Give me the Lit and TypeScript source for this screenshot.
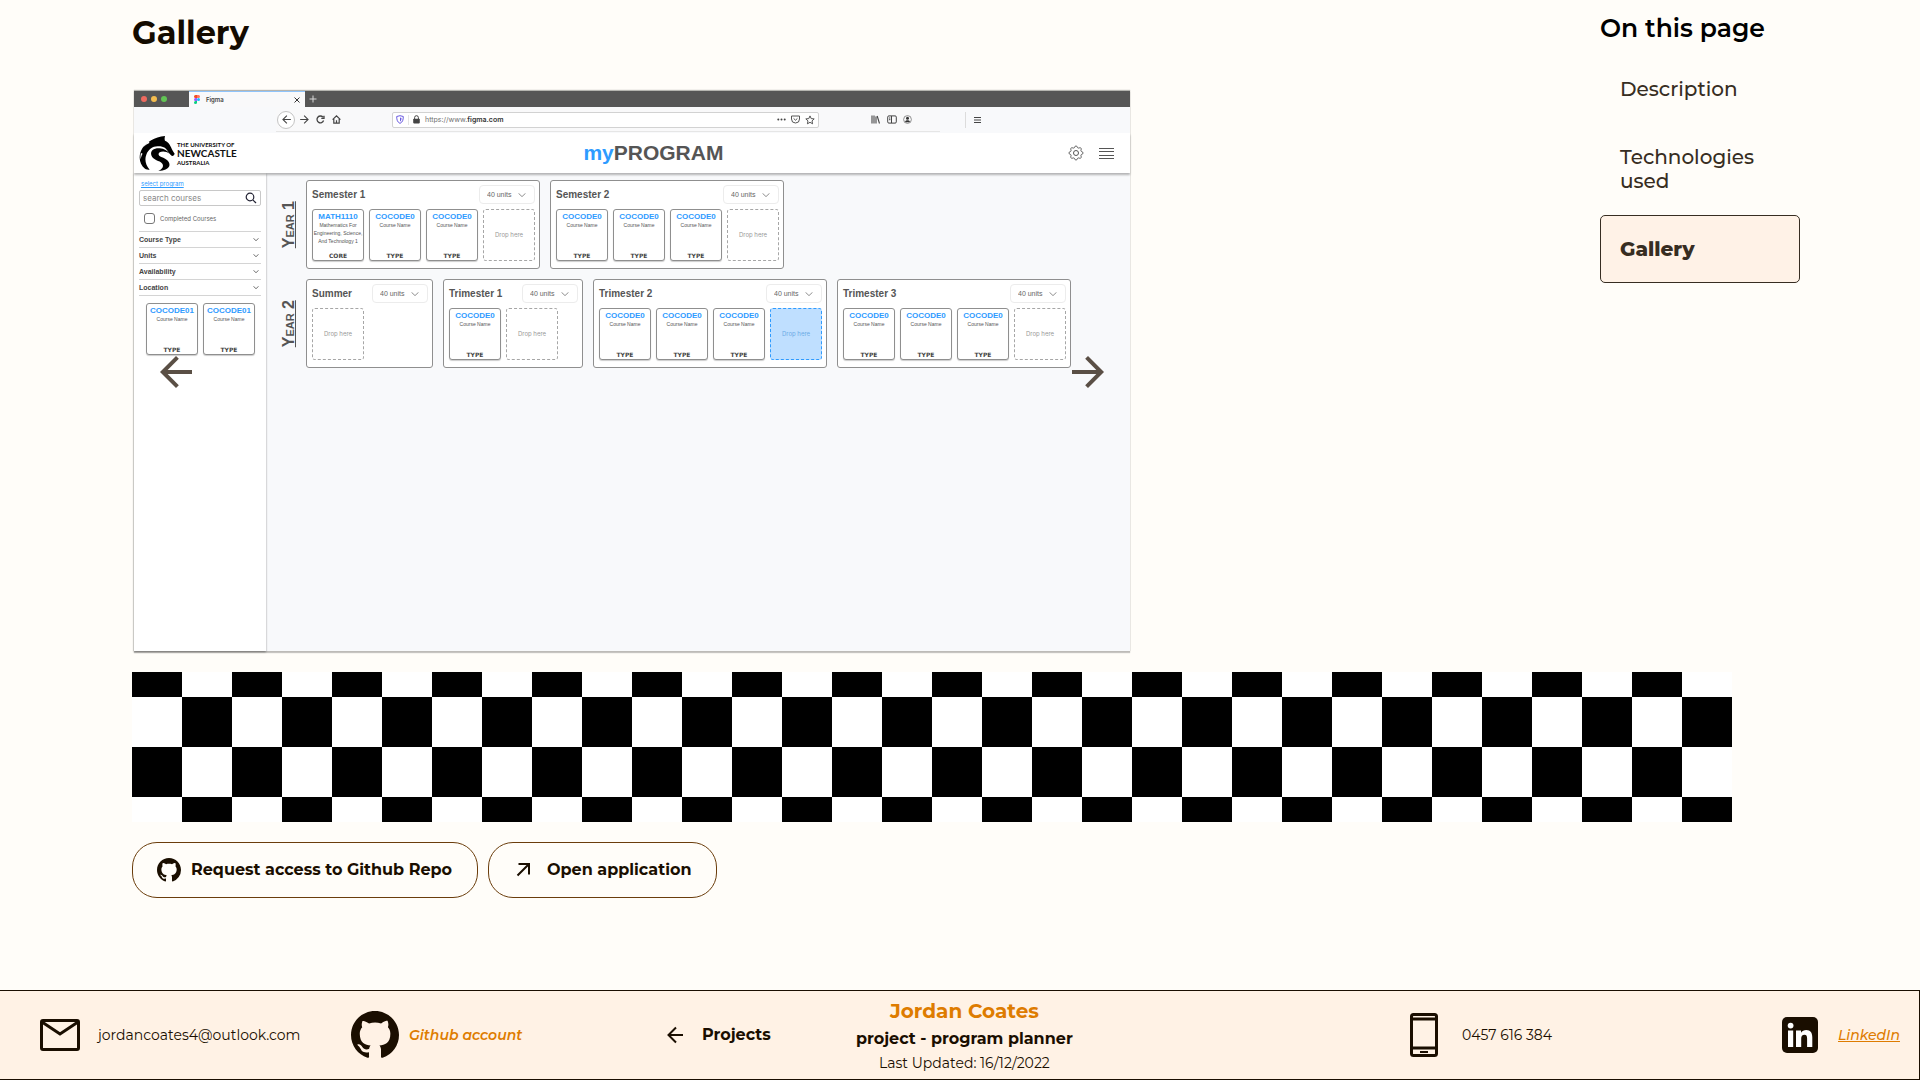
import { LitElement, html, css } from "lit";
import { customElement, property } from "lit/decorators.js";

interface Course {
  code: string;
  name: string;
  type: string;
}

interface Term {
  title: string;
  size: "small" | "medium" | "large";
  courses: Course[];
  active?: boolean;
}

interface Year {
  label: string;
  terms: Term[];
}

const course = (code = "COCODE0"): Course => ({ code, name: "Course Name", type: "TYPE" });

const YEARS: Year[] = [
  {
    label: "Year 1",
    terms: [
      {
        title: "Semester 1",
        size: "large",
        courses: [
          { code: "MATH1110", name: "Mathematics For\nEngineering, Science,\nAnd Technology 1", type: "CORE" },
          course(),
          course(),
        ],
      },
      { title: "Semester 2", size: "large", courses: [course(), course(), course()] },
    ],
  },
  {
    label: "Year 2",
    terms: [
      { title: "Summer", size: "small", courses: [] },
      { title: "Trimester 1", size: "medium", courses: [course()] },
      { title: "Trimester 2", size: "large", courses: [course(), course(), course()], active: true },
      { title: "Trimester 3", size: "large", courses: [course(), course(), course()] },
    ],
  },
];

const FILTERS = ["Course Type", "Units", "Availability", "Location"];

const reset = css`
  *,
  *::before,
  *::after {
    box-sizing: border-box;
  }
  svg {
    display: block;
    flex: none;
  }
  button {
    appearance: none;
    border: 0;
    padding: 0;
    margin: 0;
    background: none;
    color: inherit;
    font: inherit;
    cursor: pointer;
  }
  h1,
  h2,
  h3,
  p,
  ul {
    margin: 0;
    padding: 0;
    list-style: none;
  }
`;

const githubMark = (size: number) => html`<svg width=${size} height=${size} viewBox="0 0 16 16" aria-hidden="true">
  <path
    fill="currentColor"
    d="M8 0C3.58 0 0 3.58 0 8c0 3.54 2.29 6.53 5.47 7.59.4.07.55-.17.55-.38 0-.19-.01-.82-.01-1.49-2.01.37-2.53-.49-2.69-.94-.09-.23-.48-.94-.82-1.13-.28-.15-.68-.52-.01-.53.63-.01 1.08.58 1.23.82.72 1.21 1.87.87 2.33.66.07-.52.28-.87.51-1.07-1.78-.2-3.64-.89-3.64-3.95 0-.87.31-1.59.82-2.15-.08-.2-.36-1.02.08-2.12 0 0 .67-.21 2.2.82.64-.18 1.32-.27 2-.27s1.36.09 2 .27c1.53-1.04 2.2-.82 2.2-.82.44 1.1.16 1.92.08 2.12.51.56.82 1.27.82 2.15 0 3.07-1.87 3.75-3.65 3.95.29.25.54.73.54 1.48 0 1.07-.01 1.93-.01 2.2 0 .21.15.46.55.38A8.01 8.01 0 0 0 16 8c0-4.42-3.58-8-8-8z"
  />
</svg>`;

const arrowLeft = (size: number) => html`<svg width=${size} height=${size} viewBox="0 0 24 24" aria-hidden="true">
  <path fill="currentColor" d="M20 11H7.83l5.59-5.59L12 4l-8 8 8 8 1.41-1.41L7.83 13H20v-2z" />
</svg>`;

const arrowRight = (size: number) => html`<svg width=${size} height=${size} viewBox="0 0 24 24" aria-hidden="true">
  <path fill="currentColor" d="M12 4l-1.41 1.41L16.17 11H4v2h12.17l-5.58 5.59L12 20l8-8-8-8z" />
</svg>`;

const chevron = (width: number) => html`<svg
  width=${width}
  height=${width / 2}
  viewBox="0 0 8 4"
  fill="none"
  stroke="currentColor"
  aria-hidden="true"
>
  <path d="M.5 .3L4 3.6L7.5 .3" />
</svg>`;

/** Outline of the settings cog: a ring whose radius swells eight times per turn. */
const cogOutline = (() => {
  const points: string[] = [];
  for (let i = 0; i < 96; i++) {
    const a = (i / 96) * Math.PI * 2;
    const wave = Math.max(-0.6, Math.min(0.6, Math.cos(a * 8)));
    const r = 6.2 + wave * 1.1;
    points.push(`${(8 + r * Math.sin(a)).toFixed(2)} ${(8 - r * Math.cos(a)).toFixed(2)}`);
  }
  return `M${points.join("L")}Z`;
})();

@customElement("course-card")
export class CourseCard extends LitElement {
  @property({ attribute: false }) course!: Course;

  static styles = [
    reset,
    css`
      :host {
        display: block;
        width: 52px;
        flex: none;
      }
      .card {
        display: flex;
        flex-direction: column;
        align-items: center;
        height: 52px;
        padding: 2px 0 0;
        border: 1px solid #8f8f8f;
        border-radius: 3px;
        background: #fff;
        box-shadow: 0 1px 1px rgba(0, 0, 0, 0.2);
        color: #555;
        text-align: center;
        white-space: pre;
      }
      .code {
        font: 700 8px/9px "Liberation Sans", Arial, sans-serif;
        color: #2e9bff;
      }
      .name {
        font: 400 5px/8px "Liberation Sans", Arial, sans-serif;
      }
      .type {
        margin-top: auto;
        font: 700 6px/8px "DejaVu Sans", sans-serif;
        color: #444;
      }
    `,
  ];

  render() {
    return html`<article class="card">
      <h3 class="code">${this.course.code}</h3>
      <p class="name">${this.course.name}</p>
      <p class="type">${this.course.type}</p>
    </article>`;
  }
}

@customElement("term-box")
export class TermBox extends LitElement {
  @property({ attribute: false }) term!: Term;

  static styles = [
    reset,
    css`
      :host {
        display: block;
        flex: none;
      }
      .term {
        display: flex;
        flex-direction: column;
        gap: 5px;
        padding: 4px 4px 7px 5px;
        border: 1px solid #8f8f8f;
        border-radius: 3px;
        background: #fff;
      }
      .small {
        width: 127px;
      }
      .medium {
        width: 140px;
      }
      .large {
        width: 234px;
      }
      .head {
        display: flex;
        align-items: center;
        justify-content: space-between;
      }
      .title {
        font: 700 10px/12px "Liberation Sans", Arial, sans-serif;
        color: #555;
      }
      .units {
        display: grid;
        align-items: center;
        width: 56px;
        height: 19px;
        color: #8f8f8f;
      }
      .units > * {
        grid-area: 1 / 1;
      }
      .units svg {
        justify-self: end;
        margin-right: 9px;
        pointer-events: none;
      }
      select {
        appearance: none;
        width: 100%;
        height: 100%;
        margin: 0;
        padding: 0 0 0 7px;
        border: 1px solid #ececec;
        border-radius: 4px;
        background: #fff;
        color: #666;
        font: 400 7px/9px "Liberation Sans", Arial, sans-serif;
      }
      .slots {
        display: flex;
        gap: 5px;
      }
      .drop {
        display: grid;
        place-items: center;
        width: 52px;
        height: 52px;
        border: 1px dashed #a6a6a6;
        border-radius: 3px;
        font: 400 6px/8px Inter, sans-serif;
        color: #999;
      }
      .drop.active {
        border-color: #2e9bff;
        background: #bfdfff;
        color: #6cabe6;
      }
    `,
  ];

  render() {
    const t = this.term;
    return html`<section class="term ${t.size}">
      <div class="head">
        <h3 class="title">${t.title}</h3>
        <div class="units">
          <select aria-label="${t.title} units">
            <option>40 units</option>
          </select>
          ${chevron(8)}
        </div>
      </div>
      <div class="slots">
        ${t.courses.map((c) => html`<course-card .course=${c}></course-card>`)}
        <div class="drop ${t.active ? "active" : ""}">Drop here</div>
      </div>
    </section>`;
  }
}

@customElement("planner-shot")
export class PlannerShot extends LitElement {
  static styles = [
    reset,
    css`
      :host {
        display: block;
        font-family: "Liberation Sans", Arial, sans-serif;
        color: #555;
      }
      .window {
        border-top: 1px solid #b5b5b0;
        background: #f8f9fb;
        box-shadow: 0 2px 1px rgba(0, 0, 0, 0.22), 0 0 1px rgba(0, 0, 0, 0.3);
      }
      .tabs {
        display: flex;
        align-items: stretch;
        height: 16px;
        background: #565656;
      }
      .lights {
        display: flex;
        align-items: center;
        gap: 4px;
        width: 55px;
        padding-left: 7px;
      }
      .light {
        width: 6px;
        height: 6px;
        border-radius: 50%;
      }
      .red {
        background: #ee6a5f;
      }
      .amber {
        background: #f5bd4f;
      }
      .green {
        background: #61c454;
      }
      .tab {
        display: flex;
        align-items: center;
        width: 116px;
        padding: 0 5px;
        border-top: 1px solid #8fc4fb;
        background: #f9f9fa;
        font: 600 6px/8px Inter, sans-serif;
        color: #444;
      }
      .tab-name {
        flex: 1;
        padding-left: 6px;
      }
      .new-tab {
        padding: 0 4px;
        color: #d8d8d8;
      }
      .toolbar {
        display: flex;
        align-items: center;
        height: 26px;
        padding-left: 142px;
        color: #444;
      }
      .tools {
        display: flex;
        align-items: center;
        gap: 3px;
        width: 664px;
        height: 24px;
        padding-left: 1px;
        border-bottom: 1px solid #e6e6e6;
        background: #f9f9fa;
      }
      .tool {
        display: grid;
        place-items: center;
        width: 13px;
        height: 13px;
      }
      .back {
        width: 18px;
        height: 18px;
        border: 1px solid #c4c4c4;
        border-radius: 50%;
        background: #fff;
      }
      .address {
        display: flex;
        align-items: center;
        gap: 4px;
        width: 427px;
        height: 16px;
        margin: 0 47px 0 46px;
        padding: 0 3px;
        border: 1px solid #d2d2d2;
        border-radius: 2px;
        background: #fff;
      }
      .rule {
        width: 1px;
        height: 10px;
        background: #e4e4e4;
      }
      .url {
        flex: 1;
        padding-left: 1px;
        font: 400 7px/9px Inter, sans-serif;
        color: #707070;
      }
      .url b {
        font-weight: 600;
        color: #333;
      }
      .menu {
        display: flex;
        align-items: center;
        height: 16px;
        margin-left: 25px;
        padding-left: 8px;
        border-left: 1px solid #dcdcdc;
      }
      .banner {
        position: relative;
        display: grid;
        grid-template-columns: 451fr auto 408fr;
        align-items: center;
        height: 40px;
        background: #fff;
        box-shadow: 0 2px 2px rgba(0, 0, 0, 0.28);
      }
      .brand {
        display: flex;
        align-items: center;
        gap: 2px;
        padding-left: 5px;
        color: #111;
      }
      .brand-text {
        font: 700 6px/7px Lato, sans-serif;
      }
      .brand-name {
        display: block;
        font: 700 10px/11px Lato, sans-serif;
      }
      .product {
        font-size: 21px;
        line-height: 24px;
        font-weight: 700;
      }
      .product em {
        font-style: normal;
        color: #2e9bff;
      }
      .actions {
        display: flex;
        align-items: center;
        justify-content: flex-end;
        gap: 15px;
        padding-right: 16px;
      }
      .body {
        display: flex;
        min-height: 478px;
      }
      .side {
        width: 132px;
        padding: 7px 5px 0;
        background: #fff;
        box-shadow: 0 1px 2px rgba(0, 0, 0, 0.4);
      }
      .select-program {
        display: block;
        padding-left: 2px;
        font: 400 6px/8px Inter, sans-serif;
        color: #2e9bff;
      }
      .search {
        display: flex;
        align-items: center;
        height: 16px;
        margin-top: 2px;
        padding: 0 3px;
        border: 1px solid #c8c8c8;
        border-radius: 2px;
        color: #223;
      }
      .search input {
        flex: 1;
        min-width: 0;
        height: 12px;
        padding: 0;
        border: 0;
        outline: 0;
        background: none;
        font: 400 8px/10px Inter, sans-serif;
      }
      .search input::placeholder {
        color: #888;
      }
      .check {
        display: flex;
        align-items: center;
        gap: 5px;
        margin: 7px 0 7px 5px;
        font: 400 6px/8px Inter, sans-serif;
        color: #666;
      }
      .check input {
        appearance: none;
        width: 11px;
        height: 11px;
        margin: 0;
        border: 1px solid #777;
        border-radius: 3px;
      }
      .filters {
        border-top: 1px solid #d4d4d4;
      }
      .filters li {
        border-bottom: 1px solid #d4d4d4;
      }
      .filter {
        display: flex;
        align-items: center;
        justify-content: space-between;
        width: 100%;
        height: 15px;
        padding-right: 2px;
        font: 700 7px/9px "Liberation Sans", Arial, sans-serif;
        color: #444;
      }
      .results {
        display: flex;
        gap: 5px;
        margin-top: 7px;
        padding-left: 7px;
      }
      .plan {
        display: flex;
        flex-direction: column;
        gap: 10px;
        padding-top: 7px;
      }
      .year {
        display: flex;
        gap: 10px;
      }
      .year-label {
        display: flex;
        align-items: center;
        justify-content: flex-end;
        width: 30px;
      }
      .year-name {
        padding-left: 1px;
        border-left: 1px solid #555;
        writing-mode: vertical-rl;
        transform: rotate(180deg);
        font-size: 16px;
        line-height: 10px;
        font-weight: 700;
        font-variant: small-caps;
      }
    `,
  ];

  private horse() {
    return html`<svg width="36" height="35" viewBox="0 0 108 105" aria-hidden="true">
      <path
        d="M78 0C46 3 22 18 10 37C-3 58 0 84 18 98C21 100 28 101 32 101C20 88 16 70 22 56C28 40 42 30 58 31C76 31 82 38 88 48C92 55 97 60 101 60C105 58 106 55 107 53C101 46 98 36 92 26C89 20 85 17 78 14C76 10 77 5 78 0Z"
      />
      <path
        d="M92 53C82 46 70 44 62 49C56 54 59 60 67 63C84 69 94 78 91 90C87 99 76 104 58 105C70 99 75 91 70 83C62 73 42 74 37 58C33 44 45 36 62 37C76 38 85 44 92 53Z"
      />
      <path fill="#fff" d="M30 16C22 20 17 26 13 33C18 28 24 24 31 21ZM6 51C4 57 4 64 5 70C6 63 8 57 11 53Z" />
    </svg>`;
  }

  private toolbar() {
    return html`<div class="toolbar">
      <div class="tools">
        <button class="tool back" aria-label="Back">${arrowLeft(13)}</button>
        <button class="tool" aria-label="Forward">${arrowRight(13)}</button>
        <button class="tool" aria-label="Reload">
          <svg width="9" height="9" viewBox="0 0 9 9" fill="none" stroke="currentColor" stroke-width="1.3">
            <path d="M7.6 5.6A3.4 3.4 0 1 1 7 2.2M8 .8V3.4H5.3" />
          </svg>
        </button>
        <button class="tool" aria-label="Home">
          <svg width="9" height="9" viewBox="0 0 9 9" fill="none" stroke="currentColor" stroke-width="1.2">
            <path d="M.6 4.6L4.5 .9L8.4 4.6M1.8 4V8.2H7.2V4M4.5 8V5.2" />
          </svg>
        </button>
        <div class="address">
          <svg width="8" height="9" viewBox="0 0 8 9" fill="none" stroke="#6a5be0">
            <path d="M4 .7L7.3 1.5C7.3 5 6.6 7.1 4 8.4C1.4 7.1 .7 5 .7 1.5Z" />
            <path d="M4 2.5V6.5C5.2 5.6 5.5 4.5 5.5 2.9Z" fill="#6a5be0" stroke="none" />
          </svg>
          <span class="rule"></span>
          <svg width="7" height="9" viewBox="0 0 7 9">
            <rect x="0.2" y="3.8" width="6.6" height="4.6" rx="0.8" fill="#444" />
            <path d="M1.6 4V2.6a1.9 1.9 0 0 1 3.8 0V4" fill="none" stroke="#444" />
          </svg>
          <span class="url">https://www.<b>figma.com</b></span>
          <svg width="9" height="9" viewBox="0 0 9 9" fill="#444">
            <circle cx="1.3" cy="4.5" r="1" />
            <circle cx="4.5" cy="4.5" r="1" />
            <circle cx="7.7" cy="4.5" r="1" />
          </svg>
          <svg width="11" height="9" viewBox="0 0 11 9" fill="none" stroke="#555">
            <path d="M1.5 1H9.5V4A4 4 0 0 1 1.5 4ZM3.6 3.4L5.5 5.2L7.4 3.4" />
          </svg>
          <svg width="10" height="10" viewBox="0 0 10 10" fill="none" stroke="#555">
            <path d="M5 .9L6.2 3.6L9.2 3.9L7 5.9L7.6 8.8L5 7.3L2.4 8.8L3 5.9L.8 3.9L3.8 3.6Z" />
          </svg>
        </div>
        <button class="tool" aria-label="Library">
          <svg width="9" height="9" viewBox="0 0 9 9" fill="none" stroke="currentColor" stroke-width="1.1">
            <path d="M1 .5V8.5M3 .5V8.5M5 1.5V8.5M6.2 1L8.5 8.5" />
          </svg>
        </button>
        <button class="tool" aria-label="Sidebar">
          <svg width="10" height="9" viewBox="0 0 10 9" fill="none" stroke="currentColor">
            <rect x="0.7" y="0.9" width="8.6" height="7.2" rx="1.2" />
            <path d="M4.5 1V8M2 3H3.4M2 4.7H3.4" />
          </svg>
        </button>
        <button class="tool" aria-label="Account">
          <svg width="9" height="9" viewBox="0 0 9 9">
            <circle cx="4.5" cy="4.5" r="3.9" fill="none" stroke="#777" stroke-width="0.8" />
            <circle cx="4.5" cy="3.3" r="1.5" fill="#333" />
            <path d="M2 6.4C3 4.9 6 4.9 7 6.4C6 7.6 3 7.6 2 6.4Z" fill="#333" />
          </svg>
        </button>
      </div>
      <div class="menu">
        <svg width="7" height="8" viewBox="0 0 7 8" stroke="#444"><path d="M0 1.5H7M0 4H7M0 6.5H7" /></svg>
      </div>
    </div>`;
  }

  render() {
    return html`<div class="window">
      <div class="tabs">
        <div class="lights">
          <span class="light red"></span><span class="light amber"></span><span class="light green"></span>
        </div>
        <div class="tab">
          <svg width="6" height="9" viewBox="0 0 6 9">
            <path d="M3 0H1.5a1.5 1.5 0 0 0 0 3H3Z" fill="#f24e1e" />
            <path d="M3 0H4.5a1.5 1.5 0 0 1 0 3H3Z" fill="#ff7262" />
            <path d="M3 3H1.5a1.5 1.5 0 0 0 0 3H3Z" fill="#a259ff" />
            <circle cx="4.5" cy="4.5" r="1.5" fill="#1abcfe" />
            <path d="M3 6H1.5a1.5 1.5 0 1 0 1.5 1.5Z" fill="#0acf83" />
          </svg>
          <span class="tab-name">Figma</span>
          <svg width="6" height="6" viewBox="0 0 6 6" stroke="#333"><path d="M.5 .5L5.5 5.5M5.5 .5L.5 5.5" /></svg>
        </div>
        <button class="new-tab" aria-label="New tab">
          <svg width="8" height="8" viewBox="0 0 8 8" stroke="currentColor"><path d="M4 .5V7.5M.5 4H7.5" /></svg>
        </button>
      </div>
      ${this.toolbar()}
      <header class="banner">
        <div class="brand">
          ${this.horse()}
          <div class="brand-text">THE UNIVERSITY OF<span class="brand-name">NEWCASTLE</span>AUSTRALIA</div>
        </div>
        <div class="product"><em>my</em>PROGRAM</div>
        <div class="actions">
          <button aria-label="Settings">
            <svg width="16" height="16" viewBox="0 0 16 16" fill="none" stroke="currentColor">
              <path d=${cogOutline} />
              <circle cx="8" cy="8" r="2.5" />
            </svg>
          </button>
          <button aria-label="Menu">
            <svg width="15" height="13" viewBox="0 0 15 13" stroke="currentColor">
              <path d="M0 1.5H15M0 4.5H15M0 8.5H15M0 11.5H15" />
            </svg>
          </button>
        </div>
      </header>
      <div class="body">
        <aside class="side">
          <a class="select-program" href="#program">select program</a>
          <div class="search">
            <input type="search" aria-label="Search courses" placeholder="search courses" />
            <svg width="12" height="12" viewBox="0 0 12 12" fill="none" stroke="currentColor" stroke-width="1.2">
              <circle cx="5" cy="5" r="3.8" />
              <path d="M7.8 7.8L11 11" />
            </svg>
          </div>
          <label class="check"><input type="checkbox" />Completed Courses</label>
          <ul class="filters">
            ${FILTERS.map((f) => html`<li><button class="filter">${f}${chevron(6)}</button></li>`)}
          </ul>
          <div class="results">
            <course-card .course=${course("COCODE01")}></course-card>
            <course-card .course=${course("COCODE01")}></course-card>
          </div>
        </aside>
        <div class="plan">
          ${YEARS.map(
            (y) => html`<section class="year">
              <div class="year-label"><h2 class="year-name">${y.label}</h2></div>
              ${y.terms.map((t) => html`<term-box .term=${t}></term-box>`)}
            </section>`,
          )}
        </div>
      </div>
    </div>`;
  }
}

@customElement("app-root")
export class AppRoot extends LitElement {
  static styles = [
    reset,
    css`
      :host {
        display: flex;
        flex-direction: column;
        min-height: 100vh;
        background: #fffdf9;
        color: #1a0e00;
        font-family: Montserrat, Inter, sans-serif;
      }
      a {
        color: inherit;
        text-decoration: none;
      }
      .top {
        display: flex;
        justify-content: space-between;
        align-items: flex-start;
        gap: 40px;
        padding: 13px 120px 0 132px;
      }
      .gallery {
        flex: 0 1 1000px;
      }
      .heading {
        margin-bottom: 37px;
        font-size: 32px;
        line-height: 40px;
        font-weight: 700;
        color: #140b00;
      }
      .carousel {
        position: relative;
        padding: 0 2px;
      }
      .step {
        position: absolute;
        top: 50%;
        margin-top: -23px;
        color: #5a4f45;
      }
      .previous {
        left: 20px;
      }
      .next {
        right: 20px;
      }
      .contents {
        width: 200px;
        color: #372d22;
      }
      .contents-title {
        margin-bottom: 12px;
        font-size: 25px;
        line-height: 30px;
        font-weight: 600;
        color: #000;
      }
      .entry {
        display: block;
        padding: 21px 19px;
        border: 1px solid transparent;
        border-radius: 5px;
        font-size: 20px;
        line-height: 24px;
        font-weight: 500;
      }
      .entry.current {
        border-color: #372d22;
        background: #fff2e7;
        font-weight: 800;
      }
      .lower {
        display: flex;
        flex-direction: column;
        gap: 20px;
        padding: 21px 188px 20px 132px;
      }
      .checker {
        height: 150px;
        background: repeating-conic-gradient(#fff 0 25%, #000 0 50%) 0 -25px / 100px 100px;
      }
      .links {
        display: flex;
        gap: 10px;
      }
      .pill {
        display: flex;
        align-items: center;
        height: 56px;
        padding: 0 25px 0 24px;
        border: 1px solid #6b3d0c;
        border-radius: 25px;
        font-size: 16px;
        line-height: 20px;
        font-weight: 700;
      }
      .pill svg {
        margin-right: 10px;
      }
      .pill .open {
        margin-right: 14px;
      }
      .footer {
        display: grid;
        grid-template-columns: 311fr 316fr 189fr 554fr 372fr 118fr;
        align-items: center;
        height: 90px;
        margin-top: auto;
        padding: 0 19px 0 40px;
        border: 1px solid #1a0e00;
        border-left: 0;
        background: #fff2e5;
        font-size: 14px;
        line-height: 18px;
      }
      .contact {
        display: flex;
        align-items: center;
        gap: 18px;
        white-space: nowrap;
      }
      .contact.near {
        gap: 10px;
      }
      .contact.phone {
        gap: 24px;
      }
      .contact.social {
        gap: 20px;
      }
      .link {
        font-style: italic;
        font-weight: 600;
        color: #de7c00;
      }
      .underlined {
        font-weight: 500;
        text-decoration: underline;
      }
      .projects {
        font-size: 16px;
        line-height: 20px;
        font-weight: 700;
      }
      .about {
        justify-self: start;
        text-align: center;
        white-space: nowrap;
      }
      .owner {
        font-size: 20px;
        line-height: 28px;
        font-weight: 700;
        color: #de7c00;
      }
      .project {
        font-size: 16px;
        line-height: 28px;
        font-weight: 700;
      }
      .updated {
        line-height: 20px;
      }
    `,
  ];

  render() {
    return html`
      <div class="top">
        <main class="gallery">
          <h1 class="heading">Gallery</h1>
          <div class="carousel">
            <planner-shot></planner-shot>
            <button class="step previous" aria-label="Previous image">${arrowLeft(48)}</button>
            <button class="step next" aria-label="Next image">${arrowRight(48)}</button>
          </div>
        </main>
        <nav class="contents">
          <h2 class="contents-title">On this page</h2>
          <a class="entry" href="#description">Description</a>
          <a class="entry" href="#technologies">Technologies used</a>
          <a class="entry current" href="#gallery" aria-current="true">Gallery</a>
        </nav>
      </div>
      <div class="lower">
        <div class="checker"></div>
        <div class="links">
          <a class="pill" href="#repo">${githubMark(24)}Request access to Github Repo</a>
          <a class="pill" href="#app">
            <svg class="open" width="20" height="20" viewBox="0 0 20 20" fill="none" stroke="currentColor" stroke-width="2">
              <path d="M4.5 15.5L15.5 4.5M5.5 4H16V14.5" />
            </svg>
            Open application
          </a>
        </div>
      </div>
      <footer class="footer">
        <div class="contact">
          <svg width="40" height="32" viewBox="0 0 40 32" fill="none" stroke="currentColor" stroke-width="3">
            <rect x="1.5" y="1.5" width="37" height="29" rx="1.5" />
            <path d="M2 3L20 15L38 3" />
          </svg>
          <span>jordancoates4@outlook.com</span>
        </div>
        <div class="contact near">
          ${githubMark(48)}
          <a class="link" href="#github">Github account</a>
        </div>
        <a class="contact projects" href="#projects">
          <svg width="17" height="20" viewBox="0 0 17 20" fill="none" stroke="currentColor" stroke-width="2">
            <path d="M16 10H1.5M9 2.5L1.5 10L9 17.5" />
          </svg>
          Projects
        </a>
        <div class="about">
          <p class="owner">Jordan Coates</p>
          <p class="project">project - program planner</p>
          <p class="updated">Last Updated: 16/12/2022</p>
        </div>
        <div class="contact phone">
          <svg width="28" height="44" viewBox="0 0 28 44" fill="none" stroke="currentColor" stroke-width="3">
            <rect x="1.5" y="1.5" width="25" height="41" rx="2" />
            <path d="M2 6H26M2 35H26" />
            <path d="M10 39H18" stroke-width="2" />
          </svg>
          <span>0457 616 384</span>
        </div>
        <div class="contact social">
          <svg width="36" height="36" viewBox="0 0 36 36">
            <rect width="36" height="36" rx="5" fill="#1a0e00" />
            <g fill="#fff">
              <circle cx="8.6" cy="8.6" r="2.9" />
              <rect x="6" y="13.5" width="5.2" height="16.5" />
              <path
                d="M14 13.5H19V15.8C20.2 14 22 13.1 24.2 13.1C28.6 13.1 30.3 16 30.3 20.6V30H25.1V21.6C25.1 19.3 24.6 17.7 22.5 17.7C20.2 17.7 19.2 19.3 19.2 21.7V30H14Z"
              />
            </g>
          </svg>
          <a class="link underlined" href="#linkedin">LinkedIn</a>
        </div>
      </footer>
    `;
  }
}
